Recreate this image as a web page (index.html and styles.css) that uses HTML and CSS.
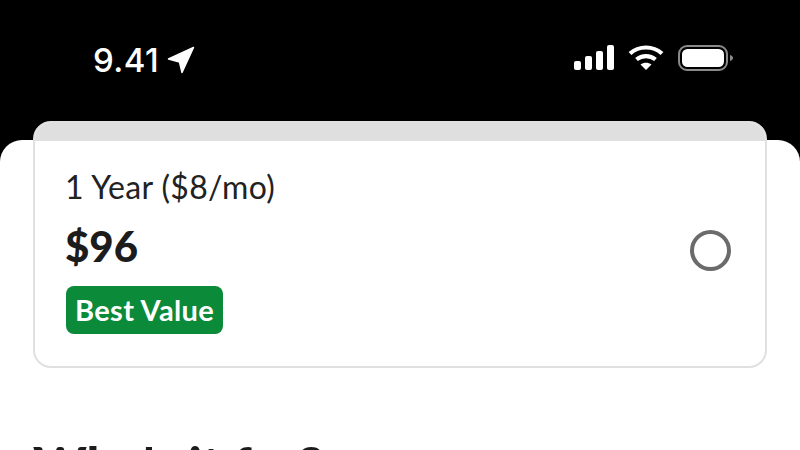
FILE: index.html
```html
<!DOCTYPE html>
<html lang="en">
<head>
<meta charset="utf-8">
<title>Plan</title>
<link rel="stylesheet" href="styles.css">
</head>
<body>
<div class="screen">
  <header class="status">
    <div class="status-left">
      <span class="time">9.41</span>
      <svg class="loc" width="28" height="28" viewBox="0 0 28 28"><path d="M1.500 13 26.500 1.500 15 26.500 12.500 16z" fill="#fff" stroke="#fff" stroke-width="1.500" stroke-linejoin="round"/></svg>
    </div>
    <div class="status-right">
      <svg class="signal" width="40" height="26" viewBox="0 0 40 26" fill="#fff"><rect x="0" y="16" width="7" height="9" rx="2"/><rect x="11" y="11" width="7" height="14" rx="2"/><rect x="22" y="6" width="7" height="19" rx="2"/><rect x="33" y="0" width="7" height="25" rx="2"/></svg>
      <svg class="wifi" width="36" height="26" viewBox="0 0 36 26" fill="none" stroke="#fff" stroke-width="4.200"><path d="M2 8.500C11 .5 25 .5 34 8.500"/><path d="M8.500 14.500c5.500-4.600 13.500-4.600 19 0"/><path d="M18 25l-5.500-5.500c3.200-2.400 7.800-2.400 11 0z" fill="#fff" stroke="none"/></svg>
      <svg class="battery" width="56" height="26" viewBox="0 0 56 26"><rect x="1" y="1" width="48" height="24" rx="8" fill="none" stroke="#8a8a8a" stroke-width="2"/><rect x="4" y="4" width="42" height="18" rx="5.500" fill="#fff"/><path d="M52 10c2 .5 3 1.700 3 3s-1 2.500-3 3z" fill="#8a8a8a"/></svg>
    </div>
  </header>
  <main class="sheet">
    <section class="card">
      <div class="card-top"></div>
      <div class="card-body">
        <div class="plan">
          <div class="plan-name">1 Year ($8/mo)</div>
          <div class="plan-price">$96</div>
          <div class="badge">Best Value</div>
        </div>
        <div class="radio"></div>
      </div>
    </section>
    <h2 class="heading">Who's it for?</h2>
  </main>
</div>
</body>
</html>
```
FILE: styles.css
```css
* { box-sizing: border-box; }
html, body { margin: 0; padding: 0; }
body { width: 800px; height: 450px; overflow: hidden; background: #000; font-family: "Lato", "Open Sans", sans-serif; }
.screen { width: 800px; height: 450px; overflow: hidden; display: flex; flex-direction: column; }
.status { height: 140px; flex: none; display: flex; justify-content: space-between; padding: 45px 66px 0 93px; align-items: flex-start; }
.status-left { display: flex; align-items: center; gap: 8px; }
.time { color: #fff; font-size: 33px; line-height: 30px; font-weight: 500; letter-spacing: 0.4px; font-family: "Inter", sans-serif; }
.loc { display: block; }
.status-right { display: flex; align-items: center; gap: 14px; }
.status-right svg { display: block; }
.sheet { flex: none; height: 400px; background: #fff; border-radius: 22px 22px 0 0; padding: 0 33px; }
.card { margin-top: -19px; width: 734px; height: 247px; border-radius: 18px; background: #fff; border: 2px solid #e0e0e0; overflow: hidden; display: flex; flex-direction: column; }
.card-top { height: 18px; flex: none; background: #dfdfdf; }
.card-body { flex: 1; display: flex; justify-content: space-between; align-items: center; padding: 0 34px 0 31px; }
.plan { display: flex; flex-direction: column; align-items: flex-start; padding-bottom: 4px; }
.plan-name { font-size: 32px; line-height: 36px; color: #222; letter-spacing: 0.35px; margin-left: -1px; }
.plan-price { font-size: 42px; line-height: 44px; font-weight: 900; color: #1c1c1c; margin-top: 19px; margin-left: -1px; }
.badge { margin-top: 18px; background: #0b8a39; color: #fff; font-size: 29px; font-weight: 700; line-height: 48px; height: 48px; padding: 0 9px; border-radius: 8px; letter-spacing: 0.35px; }
.radio { width: 41px; height: 41px; border: 4px solid #6b6b6b; border-radius: 50%; margin-bottom: 6px; }
.heading { margin: 69px 0 0; font-size: 51px; line-height: 56px; font-weight: 900; color: #1c1c1c; }
```
